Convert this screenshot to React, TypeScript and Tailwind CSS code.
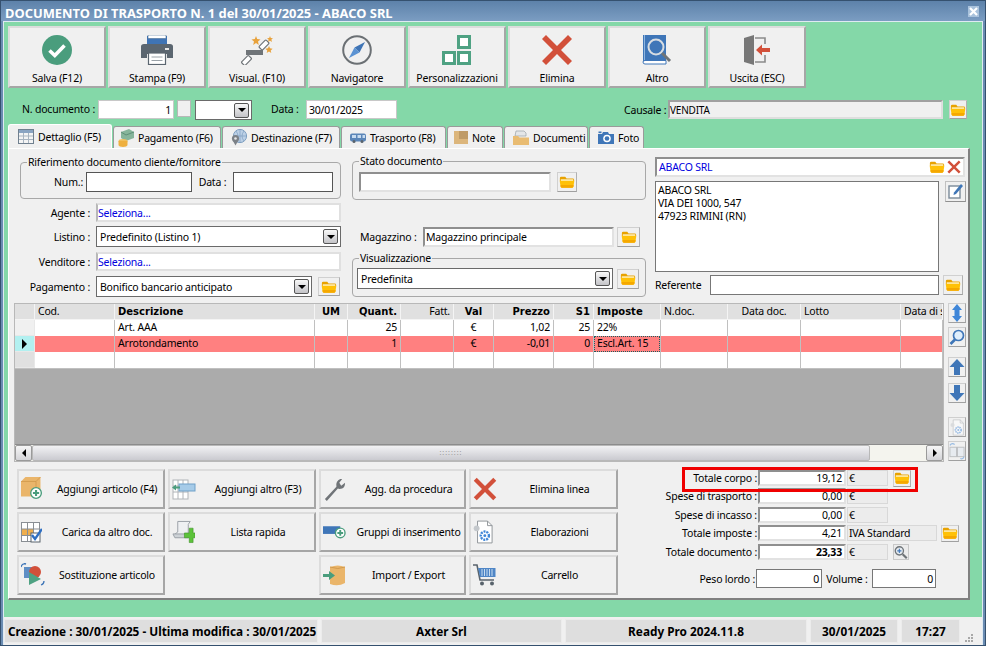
import type { ReactNode } from 'react';

const Folder = ({ size = 18 }: { size?: number }) => (
  <svg width={size} height={size} viewBox="0 0 18 18">
    <path d="M1 4.5 Q1 3 2.5 3 H7 L8.5 5 H15.5 Q17 5 17 6.5 V8 H1 Z" fill="#e8a200" />
    <path d="M2 6 H16 V8 H2 Z" fill="#fff3c8" />
    <path d="M0.8 7.5 H17.2 L16.3 14 Q16 15.5 14.5 15.5 H3.5 Q2 15.5 1.7 14 Z" fill="#ffc107" />
    <path d="M1.8 12.5 H16.4 L16.2 14 Q16 15.5 14.5 15.5 H3.5 Q2 15.5 1.9 14 Z" fill="#f5a800" />
  </svg>
);

const RedX = ({ size = 32 }: { size?: number }) => (
  <svg width={size} height={size} viewBox="0 0 32 32">
    <path d="M5 1 L16 12 L27 1 L31 5 L20 16 L31 27 L27 31 L16 20 L5 31 L1 27 L12 16 L1 5 Z" fill="#d2503a" />
  </svg>
);

const SaveIcon = () => (
  <svg width="30" height="30" viewBox="0 0 30 30">
    <circle cx="15" cy="15" r="15" fill="#4a9d7d" />
    <path d="M7.5 15.5 L12.8 20.5 L22.5 10.5" fill="none" stroke="#fff" strokeWidth="3.6" />
  </svg>
);

const PrintIcon = () => (
  <svg width="32" height="30" viewBox="0 0 32 30">
    <path d="M6 1 H26 V11 H6 Z" fill="#3f74b5" />
    <path d="M7 0 H25 V3.5 H7 Z" fill="#fff" stroke="#4c6f96" strokeWidth="0.6" />
    <path d="M0 11.5 Q0 9 3 9 H29 Q32 9 32 11.5 V23 H26 V19 H6 V23 H0 Z" fill="#5b6670" />
    <rect x="24" y="13" width="4" height="2" fill="#e8e8e8" />
    <rect x="7.5" y="18" width="17" height="11.5" fill="#fff" stroke="#5b6670" strokeWidth="1.2" />
    <path d="M10.5 22 H21.5 M10.5 25.5 H21.5" stroke="#9aa2a8" strokeWidth="1" />
  </svg>
);

const WandIcon = () => (
  <svg width="32" height="30" viewBox="0 0 32 30">
    <path d="M5 15 H22 V20 H5 Z" fill="#6f7478" />
    <rect x="18" y="7.5" width="10" height="5" rx="1" transform="rotate(-45 23 10)" fill="#fff" stroke="#6f7478" strokeWidth="1.2" />
    <rect x="0.5" y="23" width="10" height="5" rx="1" transform="rotate(-45 5.5 25.5)" fill="#fff" stroke="#6f7478" strokeWidth="1.2" />
    <path d="M15 1 L16.2 4 L19.5 4.5 L17 6.5 L17.8 10 L15 8 L12.2 10 L13 6.5 L10.5 4.5 L13.8 4 Z" fill="#e8a23c" />
    <path d="M29 1 L29.8 3 L32 3.3 L30.4 4.6 L30.9 7 L29 5.7 L27.1 7 L27.6 4.6 L26 3.3 L28.2 3 Z" fill="#e8a23c" />
    <path d="M28 11 L29 13.3 L31.6 13.7 L29.7 15.4 L30.3 18 L28 16.6 L25.7 18 L26.3 15.4 L24.4 13.7 L27 13.3 Z" fill="#e8a23c" />
  </svg>
);

const CompassIcon = () => (
  <svg width="30" height="30" viewBox="0 0 30 30">
    <circle cx="15" cy="15" r="13.8" fill="#f0f0f0" stroke="#6b7074" strokeWidth="2" />
    <path d="M23 7 L17.5 17.5 L12.5 12.5 Z" fill="#3f74b5" />
    <path d="M7 23 L12.5 12.5 L17.5 17.5 Z" fill="#5b93d3" />
  </svg>
);

const PersonalIcon = () => (
  <svg width="30" height="30" viewBox="0 0 30 30" fill="#fff" stroke="#4fa283" strokeWidth="3">
    <rect x="16.5" y="1.5" width="11" height="11" />
    <rect x="1.5" y="17.5" width="11" height="11" />
    <rect x="16.5" y="17.5" width="11" height="11" />
  </svg>
);

const BookIcon = () => (
  <svg width="30" height="30" viewBox="0 0 30 30">
    <path d="M1 0 H24 V26 H3 Q1 26 1 28 Z" fill="#3f76b8" />
    <path d="M1 27 Q1 25.5 3 25.5 H24 V29 H3 Q1 29 1 27 Z" fill="#fff" stroke="#3f76b8" />
    <path d="M2.5 0 V25" stroke="#8fb6e0" />
    <circle cx="14" cy="12" r="7.5" fill="#3f76b8" stroke="#d8dde2" strokeWidth="2" />
    <path d="M20 18 L28 26" stroke="#6f7478" strokeWidth="3" />
  </svg>
);

const ExitIcon = () => (
  <svg width="28" height="30" viewBox="0 0 28 30">
    <path d="M1 3 L11 0 V30 L1 27 Z" fill="#777" />
    <path d="M12 3 H22 V9 M22 20 V27 H12" fill="none" stroke="#8a8a8a" strokeWidth="1.6" />
    <path d="M13 15 L19 9.5 V13 H27 V17 H19 V20.5 Z" fill="#d2503a" />
  </svg>
);

const EditIcon = () => (
  <svg width="17" height="17" viewBox="0 0 17 17">
    <rect x="2" y="3" width="11" height="12" fill="#fff" stroke="#7b8a99" strokeWidth="1.4" />
    <path d="M14 1 L16 3 L9 11 L6.5 12 L7 9.5 Z" fill="#3f76b8" />
  </svg>
);

const Magnifier = () => (
  <svg width="16" height="16" viewBox="0 0 16 16">
    <circle cx="9.5" cy="6.5" r="5" fill="#dfeefc" stroke="#3f76b8" strokeWidth="1.7" />
    <path d="M6 10.5 L1.5 15" stroke="#3f76b8" strokeWidth="2.6" />
  </svg>
);

const MagnifierRight = () => (
  <svg width="17" height="17" viewBox="0 0 17 17">
    <circle cx="6.5" cy="6.5" r="5" fill="#e4eaf0" stroke="#6f7478" strokeWidth="1.6" />
    <path d="M10.5 10.5 L15.5 15.5" stroke="#6f7478" strokeWidth="2.6" />
    <path d="M4 6.5 H9 M6.5 4 V9" stroke="#3f76b8" strokeWidth="1.3" />
  </svg>
);

const Arrow = ({ dir }: { dir: 'up' | 'down' | 'both' }) => (
  <svg width="16" height="18" viewBox="0 0 16 18">
    {dir === 'up' && <path d="M8 1 L15.5 9 H11 V17 H5 V9 H0.5 Z" fill="#3f76b8" />}
    {dir === 'down' && <path d="M8 17 L15.5 9 H11 V1 H5 V9 H0.5 Z" fill="#3f76b8" />}
    {dir === 'both' && <path d="M8 0 L13 6 H10.5 V12 H13 L8 18 L3 12 H5.5 V6 H3 Z" fill="#3f86d8" />}
  </svg>
);

const GearDoc = ({ faded = false, w = 22, h = 26 }: { faded?: boolean; w?: number; h?: number }) => (
  <svg width={w} height={h} viewBox="0 0 22 26" className={faded ? 'opacity-50' : ''}>
    <path d="M5 1 H16 L21 6 V25 H5 Z" fill="#fff" stroke="#8a8f94" />
    <path d="M16 1 V6 H21" fill="none" stroke="#8a8f94" />
    <circle cx="4" cy="9" r="3.2" fill="#c4c8cc" />
    <circle cx="13" cy="17" r="4.5" fill="none" stroke="#3f86d8" strokeWidth="2.6" strokeDasharray="2.2 1" />
    <circle cx="13" cy="17" r="1.6" fill="#3f86d8" />
  </svg>
);

const CopyDoc = () => (
  <svg width="17" height="18" viewBox="0 0 17 18" className="opacity-50">
    <rect x="1" y="5" width="7" height="10" fill="#dfe8f0" stroke="#8a8f94" />
    <rect x="9" y="5" width="7" height="10" fill="#dfe8f0" stroke="#8a8f94" />
    <path d="M1 3 Q3 0 6 2 M16 15 Q15 18 12 17" fill="none" stroke="#3f86d8" strokeWidth="1.3" />
  </svg>
);

const TableIcon = () => (
  <svg width="16" height="15" viewBox="0 0 16 15">
    <rect x="0.5" y="0.5" width="15" height="14" fill="#f4f4f4" stroke="#70808f" />
    <rect x="1" y="1" width="14" height="3" fill="#8aa4c2" />
    <path d="M1 7 H15 M1 10.5 H15 M5.5 4 V14 M10.5 4 V14" stroke="#a8b4c0" />
  </svg>
);
const MoneyIcon = () => (
  <svg width="16" height="18" viewBox="0 0 16 18">
    <path d="M3 3 L11 0 L16 3 V9 L8 12 L3 9 Z" fill="#86b59b" />
    <path d="M3 3 L8 6 L16 3" fill="none" stroke="#5f8f78" />
    <ellipse cx="5" cy="12" rx="4.5" ry="2" fill="#f1c05e" />
    <path d="M0.5 12 V16 C0.5 18.5 9.5 18.5 9.5 16 V12" fill="#eeb040" />
  </svg>
);
const GlobeIcon = () => (
  <svg width="16" height="17" viewBox="0 0 16 17">
    <circle cx="9" cy="7" r="6.6" fill="#bcd0e6" stroke="#7f9fc0" />
    <path d="M2.5 7 H15.5 M9 0.5 V13.5 M5 2 Q9 7 5 12 M13 2 Q9 7 13 12" fill="none" stroke="#7f9fc0" strokeWidth="0.7" />
    <circle cx="4.5" cy="9.5" r="3.6" fill="#7c8187" />
    <path d="M2 12 L4.5 16.5 L7 12 Z" fill="#7c8187" />
    <circle cx="4.5" cy="9.5" r="1.3" fill="#e8e8e8" />
  </svg>
);
const TruckIcon = () => (
  <svg width="16" height="10" viewBox="0 0 16 10">
    <rect x="0" y="0.5" width="16" height="8" rx="2" fill="#5b86b8" />
    <path d="M2 2 H6 V5 H2 Z M7.5 2 H11 V5 H7.5 Z M12.5 2 H15 V5 H12.5 Z" fill="#c8dcf0" />
    <circle cx="4" cy="8.5" r="1.5" fill="#59636c" />
    <circle cx="12" cy="8.5" r="1.5" fill="#59636c" />
  </svg>
);
const NoteIcon = () => (
  <svg width="14" height="13" viewBox="0 0 14 13">
    <rect width="14" height="13" fill="#d9b277" />
    <path d="M5 0 H14 V8 H5 Z" fill="#b89563" opacity="0.8" />
    <path d="M0 0 H5 V8 H14 V13 H0 Z" fill="#dcb67c" />
  </svg>
);
const DocsIcon = () => (
  <svg width="16" height="15" viewBox="0 0 16 15">
    <path d="M2 6 L3 1 H11 L13 3 V6 Z" fill="#e4e6e8" stroke="#9aa0a6" strokeWidth="0.7" />
    <path d="M0 6 H5 L6.5 7.5 H16 V15 H0 Z" fill="#e9bc72" />
  </svg>
);
const CameraIcon = () => (
  <svg width="16" height="13" viewBox="0 0 16 13">
    <path d="M0 3 H4 L5 1 H10 L11 3 H16 V13 H0 Z" fill="#3f76b8" />
    <rect x="0.5" y="0.5" width="3" height="1.6" fill="#3f76b8" />
    <circle cx="9" cy="7.5" r="3.8" fill="#fff" />
    <circle cx="9" cy="7.5" r="2.3" fill="#3f76b8" />
  </svg>
);

const AddBox = () => (
  <svg width="23" height="24" viewBox="0 0 26 27">
    <path d="M0 5 L5 0 H22 V22 H0 Z" fill="#eab56a" />
    <path d="M0 5 H17 L22 0" fill="none" stroke="#d29a4d" />
    <path d="M17 5 V22" stroke="#d29a4d" />
    <circle cx="17" cy="18" r="6" fill="#fff" stroke="#4a9d7d" strokeWidth="1.5" />
    <path d="M13.5 18 H20.5 M17 14.5 V21.5" stroke="#4a9d7d" strokeWidth="2.4" />
  </svg>
);
const AddOther = () => (
  <svg width="24" height="21" viewBox="0 0 24 21">
    <rect x="1" y="1" width="15" height="19" fill="#fff" stroke="#b0b4b8" />
    <path d="M1 7 H16 M1 13 H16 M6 1 V20 M11 1 V20" stroke="#b0b4b8" />
    <rect x="7" y="5" width="16" height="7" fill="#a6cbe8" stroke="#6fa0c8" />
    <path d="M0 8.5 L4 5.5 V11.5 Z M3 7.5 H8 V9.5 H3 Z" fill="#4a9d7d" />
  </svg>
);
const LoadDoc = () => (
  <svg width="21" height="21" viewBox="0 0 21 21">
    <rect x="0.5" y="0.5" width="18" height="19" fill="#fff" stroke="#8a8f94" />
    <rect x="1" y="7" width="11.5" height="6" fill="#efae4d" />
    <path d="M0.5 7 H18.5 M0.5 13.5 H18.5 M6.5 0.5 V19.5 M12.5 0.5 V19.5" stroke="#8a8f94" />
    <rect x="10" y="11" width="9" height="9" fill="#fff" stroke="#59636c" />
    <path d="M11 13 L14 17 L21 7" fill="none" stroke="#2f6fc2" strokeWidth="2.4" />
  </svg>
);
const ListIcon = () => (
  <svg width="23" height="24" viewBox="0 0 24 24">
    <path d="M6 1 H19 L17 4 V15 H2 L6 12 Z" fill="#eef0f2" stroke="#9aa0a6" />
    <path d="M1 14 H15 L17 18 H3 Z" fill="#cdd2d6" stroke="#9aa0a6" />
    <path d="M13 13 H18 V8 H22 V13 H24 V18 H22 V23 H18 V18 H13 Z" fill="#5cc23a" stroke="#3b8f24" strokeWidth="0.6" />
  </svg>
);
const SwapIcon = () => (
  <svg width="24" height="24" viewBox="0 0 24 24">
    <rect x="3" y="4" width="10" height="11" fill="#5f8ec4" />
    <circle cx="14" cy="9" r="6" fill="#d2503a" />
    <path d="M8 9 L20 16 L8 22 Z" fill="#4fa283" />
    <path d="M0 4 Q1 0 5 1 M5 1 L3 0 M20 22 Q23 21 23 18" fill="none" stroke="#3f76b8" strokeWidth="1.3" />
  </svg>
);
const WrenchIcon = () => (
  <svg width="23" height="23" viewBox="0 0 24 24">
    <path d="M2 22 L14 9 Q13 3 18 1 L20 1 L17 5 L19 8 L23 5 Q23 10 20 11 Q17 12 15.5 11 L4 24 Z" fill="#707478" />
  </svg>
);
const GroupIcon = () => (
  <svg width="23" height="14" viewBox="0 0 24 14">
    <rect x="0" y="1" width="18" height="8" fill="#3f76b8" />
    <circle cx="18" cy="8" r="5" fill="#fff" stroke="#4a9d7d" strokeWidth="1.4" />
    <path d="M15 8 H21 M18 5 V11" stroke="#4a9d7d" strokeWidth="2" />
  </svg>
);
const ImportIcon = () => (
  <svg width="23" height="21" viewBox="0 0 23 21">
    <path d="M7 2 Q15 -1 22 2 V18 Q15 22 7 19 Z" fill="#eab56a" />
    <path d="M7 2 Q15 5 22 2" fill="none" stroke="#d29a4d" />
    <path d="M0 9 H6 V6 L12 10.5 L6 15 V12 H0 Z" fill="#4a9d7d" />
  </svg>
);
const CartIcon = () => (
  <svg width="23" height="22" viewBox="0 0 23 22">
    <path d="M0 1 H4 L7 16 H21" fill="none" stroke="#59636c" strokeWidth="1.6" />
    <path d="M5 4 H22.5 V13 H7 Z" fill="#4f86c6" />
    <path d="M9 5 V12 M11.5 5 V12 M14 5 V12 M16.5 5 V12 M19 5 V12" stroke="#c8dcf0" />
    <circle cx="9" cy="19.5" r="2" fill="#59636c" />
    <circle cx="19" cy="19.5" r="2" fill="#59636c" />
  </svg>
);
const Grip = () => (
  <svg width="10" height="10" viewBox="0 0 10 10" fill="#a8a8a8">
    <rect x="7" y="1" width="2" height="2" />
    <rect x="4" y="4" width="2" height="2" />
    <rect x="7" y="4" width="2" height="2" />
    <rect x="1" y="7" width="2" height="2" />
    <rect x="4" y="7" width="2" height="2" />
    <rect x="7" y="7" width="2" height="2" />
  </svg>
);

const raised = 'border-2 border-t-[#dcdcdc] border-l-[#dcdcdc] border-r-[#a6a6a6] border-b-[#a6a6a6] bg-[#f0f0f0]';
const sunken = 'border-2 border-t-[#8f8f8f] border-l-[#8f8f8f] border-r-[#e2e2e2] border-b-[#e2e2e2]';

const FolderBtn = ({ w = 'w-[20px]', h = 'h-[20px]' }: { w?: string; h?: string }) => (
  <div className={`${w} ${h} shrink-0 flex items-center justify-center border border-[#d0d0d0] border-b-[#a0a0a0] border-r-[#b0b0b0] bg-[#f0f0f0]`}>
    <Folder size={16} />
  </div>
);

const ComboArrow = () => (
  <div className="w-[15px] h-[15px] shrink-0 flex items-center justify-center rounded-[2px] border border-[#555] bg-gradient-to-b from-[#f8f8f8] to-[#c4c4c8]">
    <div className="w-0 h-0 border-x-[4px] border-x-transparent border-t-[4px] border-t-black" />
  </div>
);

const Combo = ({ text, className }: { text?: string; className: string }) => (
  <div className={`${className} flex items-center justify-between border border-[#6a6a6a] bg-white pl-[3px] pr-[2px]`}>
    <span>{text}</span>
    <ComboArrow />
  </div>
);

const LinkField = ({ className }: { className: string }) => (
  <div className={`${className} flex items-center border-2 border-[#e0e0e0] border-l-[#b8b8b8] bg-white text-[#0000e0]`}>Seleziona...</div>
);

const GroupBox = ({ title, className, children }: { title: string; className: string; children: ReactNode }) => (
  <div className={`relative rounded-[4px] border border-[#a8a8a8] ${className}`}>
    <span className="absolute -top-[8px] left-[6px] bg-[#f0f0f0] px-[1px] leading-[14px]">{title}</span>
    {children}
  </div>
);

const tools = [
  { label: 'Salva (F12)', icon: <SaveIcon /> },
  { label: 'Stampa (F9)', icon: <PrintIcon /> },
  { label: 'Visual. (F10)', icon: <WandIcon /> },
  { label: 'Navigatore', icon: <CompassIcon /> },
  { label: 'Personalizzazioni', icon: <PersonalIcon /> },
  { label: 'Elimina', icon: <RedX /> },
  { label: 'Altro', icon: <BookIcon /> },
  { label: 'Uscita (ESC)', icon: <ExitIcon /> },
];

const tabs = [
  { label: 'Dettaglio (F5)', cls: 'w-[104px] pl-[9px]', icon: <TableIcon />, active: true },
  { label: 'Pagamento (F6)', cls: 'w-[108px] pl-[4px]', icon: <MoneyIcon /> },
  { label: 'Destinazione (F7)', cls: 'w-[118px] pl-[8px]', icon: <GlobeIcon /> },
  { label: 'Trasporto (F8)', cls: 'w-[105px] pl-[8px]', icon: <TruckIcon /> },
  { label: 'Note', cls: 'w-[56px] pl-[6px]', icon: <NoteIcon /> },
  { label: 'Documenti', cls: 'w-[84px] pl-[8px]', icon: <DocsIcon /> },
  { label: 'Foto', cls: 'w-[55px] pl-[8px]', icon: <CameraIcon /> },
];

const columns = [
  { title: 'Cod.', w: 'w-[80px]', align: 'text-left' },
  { title: 'Descrizione', w: 'w-[200px]', align: 'text-left', bold: true },
  { title: 'UM', w: 'w-[33px]', align: 'text-center', bold: true },
  { title: 'Quant.', w: 'w-[53px]', align: 'text-right', bold: true },
  { title: 'Fatt.', w: 'w-[53px]', align: 'text-right' },
  { title: 'Val', w: 'w-[40px]', align: 'text-center', bold: true },
  { title: 'Prezzo', w: 'w-[60px]', align: 'text-right', bold: true },
  { title: 'S1', w: 'w-[40px]', align: 'text-right', bold: true },
  { title: 'Imposte', w: 'w-[67px]', align: 'text-left', bold: true },
  { title: 'N.doc.', w: 'w-[67px]', align: 'text-left' },
  { title: 'Data doc.', w: 'w-[73px]', align: 'text-center' },
  { title: 'Lotto', w: 'w-[100px]', align: 'text-left' },
  { title: 'Data di s', w: 'w-[42px]', align: 'text-left' },
];

const rows = [
  ['', 'Art. AAA', '', '25', '', '€', '1,02', '25', '22%', '', '', '', ''],
  ['', 'Arrotondamento', '', '1', '', '€', '-0,01', '0', 'Escl.Art. 15', '', '', '', ''],
  ['', '', '', '', '', '', '', '', '', '', '', '', ''],
];

const actions = [
  { label: 'Aggiungi articolo (F4)', icon: <AddBox /> },
  { label: 'Aggiungi altro (F3)', icon: <AddOther /> },
  { label: 'Agg. da procedura', icon: <WrenchIcon /> },
  { label: 'Elimina linea', icon: <RedX size={24} /> },
  { label: 'Carica da altro doc.', icon: <LoadDoc /> },
  { label: 'Lista rapida', icon: <ListIcon /> },
  { label: 'Gruppi di inserimento', icon: <GroupIcon /> },
  { label: 'Elaborazioni', icon: <GearDoc w={20} h={24} /> },
  { label: 'Sostituzione articolo', icon: <SwapIcon /> },
  null,
  { label: 'Import / Export', icon: <ImportIcon /> },
  { label: 'Carrello', icon: <CartIcon /> },
];

const sideButtons = [
  { icon: <Arrow dir="both" />, cls: 'mt-0' },
  { icon: <Magnifier />, cls: 'mt-[4px]' },
  { icon: <Arrow dir="up" />, cls: 'mt-[10px]' },
  { icon: <Arrow dir="down" />, cls: 'mt-[6px]' },
  { icon: <GearDoc faded w={14} h={17} />, cls: 'mt-[14px]' },
  { icon: <CopyDoc />, cls: 'mt-[4px]' },
];

const totals = [
  { label: 'Totale corpo :', value: '19,12', unit: '€', cls: 'mt-[1px]', folder: true },
  { label: 'Spese di trasporto :', value: '0,00', unit: '€', cls: 'mt-[2px]' },
  { label: 'Spese di incasso :', value: '0,00', unit: '€', cls: 'mt-[3px]' },
  { label: 'Totale imposte :', value: '4,21', unit: 'IVA Standard', cls: 'mt-[2px]', folder: true, wide: true },
  { label: 'Totale documento :', value: '23,33', unit: '€', cls: 'mt-[3px]', bold: true, zoom: true },
];

export default function App() {
  return (
    <div className="w-[986px] h-[646px] flex flex-col overflow-hidden whitespace-nowrap border border-[#35516f] bg-[#6a8cb2] text-[10.5px] tracking-[-0.2px] leading-[14px] text-black font-['Noto_Sans',sans-serif]">
      {/* title bar */}
      <div className="h-[20px] shrink-0 flex items-center justify-between bg-gradient-to-b from-[#5d82aa] to-[#7b9dc2] pl-[4px] pr-[6px] text-white">
        <span className="pt-[3px] text-[12.9px] tracking-normal font-bold">DOCUMENTO DI TRASPORTO N. 1 del 30/01/2025 - ABACO SRL</span>
        <div className="w-[11px] h-[11px] flex items-center justify-center bg-[#a9c2dc]">
          <svg width="9" height="9" viewBox="0 0 9 9"><path d="M1 1 L8 8 M8 1 L1 8" stroke="#fff" strokeWidth="2.2" /></svg>
        </div>
      </div>

      <div className="mx-[2px] flex-1 flex flex-col border border-b-0 border-[#dfeaf2] bg-[#84d8a8]">
        {/* toolbar */}
        <div className="mt-[4px] ml-[4px] flex gap-[2px]">
          {tools.map((t) => (
            <div key={t.label} className={`w-[98px] h-[62px] flex flex-col items-center ${raised}`}>
              <div className="h-[30px] mt-[7px] flex items-center justify-center">{t.icon}</div>
              <span className="mt-[6px]">{t.label}</span>
            </div>
          ))}
        </div>

        {/* document row */}
        <div className="mt-[12px] ml-[4px] w-[961px] flex items-start">
          <span className="w-[87px] text-right leading-[18px]">N. documento :</span>
          <div className="ml-[3px] w-[76px] h-[19px] flex items-center justify-end border border-[#c8c8c8] bg-white pr-[2px]">1</div>
          <div className="ml-[3px] w-[14px] h-[17px] border border-[#b8b8b8] bg-[#f0f0f0]" />
          <Combo className="ml-[4px] w-[57px] h-[20px]" />
          <span className="ml-[19px] w-[30px] leading-[18px]">Data :</span>
          <div className="ml-[5px] w-[91px] h-[19px] flex items-center border border-[#c8c8c8] bg-white pl-[2px]">30/01/2025</div>
          <span className="ml-[227px] w-[44px] leading-[20px]">Causale :</span>
          <div className="w-[275px] h-[19px] flex items-center border-2 border-t-[#a0a0a0] border-l-[#a0a0a0] border-r-[#dedede] border-b-[#dedede] bg-[#f0f0f0] text-[10px]">VENDITA</div>
          <div className="ml-[6px]"><FolderBtn w="w-[18px]" h="h-[19px]" /></div>
        </div>

        {/* tabs */}
        <div className="mt-[4px] ml-[4px] h-[24px] flex items-end gap-[1px]">
          {tabs.map((t) => (
            <div
              key={t.label}
              className={`${t.cls} flex items-center gap-[4px] rounded-t-[3px] border border-b-0 border-[#9a9a9a] bg-[#f0f0f0] ${t.active ? 'h-[24px] border-white' : 'h-[22px]'}`}
            >
              <span className="shrink-0">{t.icon}</span>
              <span>{t.label}</span>
            </div>
          ))}
        </div>

        {/* tab page */}
        <div className="ml-[4px] w-[962px] h-[452px] flex flex-col border-l border-t border-l-white border-t-white border-r-2 border-b-2 border-r-[#808080] border-b-[#808080] bg-[#f0f0f0] pl-[5px]">
          <div className="ml-[6px] h-[140px] mt-[8px] flex">
            {/* left column */}
            <div className="w-[321px] flex flex-col">
              <GroupBox title="Riferimento documento cliente/fornitore" className="mt-[5px] h-[37px] flex items-center pt-[3px]">
                <span className="w-[62px] text-right">Num.:</span>
                <div className="ml-[3px] w-[106px] h-[20px] border border-[#555] bg-white" />
                <span className="w-[41px] text-center">Data :</span>
                <div className="w-[100px] h-[20px] border border-[#555] bg-white" />
              </GroupBox>
              <div className="mt-[4px] flex items-center">
                <span className="w-[70px] text-right">Agente :</span>
                <LinkField className="ml-[6px] w-[245px] h-[19px]" />
              </div>
              <div className="mt-[4px] flex items-center">
                <span className="w-[70px] text-right">Listino :</span>
                <Combo text="Predefinito (Listino 1)" className="ml-[6px] w-[245px] h-[21px]" />
              </div>
              <div className="mt-[5px] flex items-center">
                <span className="w-[70px] text-right">Venditore :</span>
                <LinkField className="ml-[6px] w-[245px] h-[19px]" />
              </div>
              <div className="mt-[5px] flex items-center">
                <span className="w-[70px] text-right">Pagamento :</span>
                <Combo text="Bonifico bancario anticipato" className="ml-[6px] w-[216px] h-[21px]" />
                <div className="ml-[6px]"><FolderBtn w="w-[22px]" h="h-[19px]" /></div>
              </div>
            </div>

            {/* middle column */}
            <div className="ml-[11px] w-[294px] flex flex-col">
              <GroupBox title="Stato documento" className="mt-[4px] h-[39px] flex items-center pl-[6px] pt-[3px]">
                <div className={`w-[192px] h-[20px] bg-white ${sunken}`} />
                <div className="ml-[6px]"><FolderBtn /></div>
              </GroupBox>
              <div className="mt-[27px] flex items-center">
                <span className="w-[71px] pl-[8px]">Magazzino :</span>
                <div className={`w-[191px] h-[20px] flex items-center bg-white pl-[1px] ${sunken}`}>Magazzino principale</div>
                <div className="ml-[3px]"><FolderBtn w="w-[23px]" h="h-[20px]" /></div>
              </div>
              <GroupBox title="Visualizzazione" className="mt-[11px] h-[40px] flex items-center pl-[4px] pt-[3px]">
                <Combo text="Predefinita" className="w-[256px] h-[21px]" />
                <div className="ml-[4px]"><FolderBtn w="w-[22px]" h="h-[20px]" /></div>
              </GroupBox>
            </div>

            {/* customer column */}
            <div className="ml-[9px] w-[312px] flex flex-col">
              <div className={`w-[310px] h-[20px] flex items-center justify-between bg-white pl-[2px] pr-[2px] text-[#0000e0] ${sunken}`}>
                <span>ABACO SRL</span>
                <span className="flex items-center gap-[2px]"><Folder size={16} /><RedX size={14} /></span>
              </div>
              <div className="mt-[4px] flex items-start">
                <div className="w-[284px] h-[91px] border border-[#777] bg-white pl-[2px] pt-[2px] leading-[13px]">
                  <div>ABACO SRL</div>
                  <div>VIA DEI 1000, 547</div>
                  <div>47923 RIMINI (RN)</div>
                </div>
                <div className="ml-[6px] w-[21px] h-[21px] flex items-center justify-center border border-[#c0c0c0] border-b-[#909090] border-r-[#a0a0a0] bg-[#f0f0f0]"><EditIcon /></div>
              </div>
              <div className="mt-[3px] flex items-center">
                <span className="w-[55px]">Referente</span>
                <div className="w-[229px] h-[20px] border border-[#777] bg-white" />
                <div className="ml-[4px]"><FolderBtn /></div>
              </div>
            </div>
          </div>

          {/* grid */}
          <div className="mt-[6px] flex">
            <div className="w-[930px] h-[159px] flex flex-col border border-[#b8b8b8] bg-[#ababab]">
              <div className="flex h-[16px] shrink-0 bg-[#e0e0e0] border-b border-[#f4f4f4]">
                <div className="w-[20px] border-r border-[#f4f4f4]" />
                {columns.map((c) => (
                  <div key={c.title} className={`${c.w} ${c.align} ${c.bold ? "font-bold font-['DejaVu_Sans',sans-serif] text-[10px] tracking-normal" : ''} shrink-0 overflow-hidden border-r border-[#f4f4f4] px-[3px] leading-[15px]`}>{c.title}</div>
                ))}
              </div>
              {rows.map((r, i) => (
                <div key={i} className={`flex h-[16px] shrink-0 ${i === 1 ? 'bg-[#ff8080]' : 'bg-white'}`}>
                  <div className={`w-[20px] shrink-0 flex items-center justify-center border-r border-b border-[#e8e8e8] ${i === 1 ? 'bg-[#b2f0f0]' : i === 2 ? 'bg-[#e0e0e0]' : 'bg-[#f0f0f0]'}`}>
                    {i === 1 && <div className="w-0 h-0 border-y-[5px] border-y-transparent border-l-[5px] border-l-black" />}
                  </div>
                  {r.map((v, j) => (
                    <div key={j} className={`${columns[j].w} ${columns[j].align} relative shrink-0 overflow-hidden px-[3px] leading-[15px] border-r border-[#c0c0c0]`}>
                      {v}
                      {i === 1 && j === 8 && <div className="absolute inset-0 border border-dotted border-[#1a5f5f]" />}
                    </div>
                  ))}
                </div>
              ))}
              <div className="flex-1 border-t border-[#c0c0c0]" />
              <div className="h-[17px] shrink-0 flex items-center border-t border-[#8c8c8c] bg-[#f4f4ee]">
                <div className="w-[17px] h-[16px] flex items-center justify-center border border-[#9a9a9a] rounded-[2px] bg-gradient-to-b from-[#f6f6f6] to-[#d4d4d8]">
                  <div className="w-0 h-0 border-y-[4px] border-y-transparent border-r-[4px] border-r-black" />
                </div>
                <div className="w-[838px] h-[16px] flex items-center justify-center rounded-[2px] border border-[#b8b8b8] bg-gradient-to-b from-[#f2f2f4] to-[#cacad0] text-[#9a9a9a] text-[7px] tracking-[1px]">::::::::</div>
                <div className="flex-1" />
                <div className="w-[17px] h-[16px] flex items-center justify-center border border-[#9a9a9a] rounded-[2px] bg-gradient-to-b from-[#f6f6f6] to-[#d4d4d8]">
                  <div className="w-0 h-0 border-y-[4px] border-y-transparent border-l-[4px] border-l-black" />
                </div>
              </div>
            </div>
            <div className="ml-[4px] w-[18px] flex flex-col">
              {sideButtons.map((b, i) => (
                <div key={i} className={`${b.cls} w-[18px] h-[20px] flex items-center justify-center border border-[#cfcfcf] border-b-[#a0a0a0] border-r-[#a8a8a8] bg-[#f0f0f0]`}>{b.icon}</div>
              ))}
            </div>
          </div>

          {/* bottom actions + totals */}
          <div className="mt-[7px] flex">
            <div className="ml-[3px] grid grid-cols-[148px_148px_147px_149px] grid-rows-[40px_40px_40px] gap-x-[3px] gap-y-[3px]">
              {actions.map((a, i) => a ? (
                <div key={a.label} className={`flex items-center ${raised}`}>
                  <div className="ml-[2px] w-[30px] shrink-0 flex items-center">{a.icon}</div>
                  <span className="flex-1 text-center">{a.label}</span>
                </div>
              ) : <div key={i} />)}
            </div>

            <div className="relative ml-[22px]">
              <div className="absolute -top-[2px] left-[42px] w-[236px] h-[25px] border-[3px] border-[#f00000]" />
              {totals.map((t) => (
                <div key={t.label} className={`${t.cls} flex items-center h-[16px]`}>
                  <span className="w-[117px] text-right">{t.label}</span>
                  <div className={`ml-[1px] w-[88px] h-[16px] flex items-center justify-end bg-white pr-[2px] ${t.bold ? 'font-bold' : ''} ${sunken}`}>{t.value}</div>
                  <div className={`ml-[1px] ${t.wide ? 'w-[90px]' : 'w-[41px]'} h-[16px] flex items-center border border-[#d8d8d8] bg-[#ececec] pl-[1px]`}>{t.unit}</div>
                  {t.folder && <div className={t.wide ? 'ml-[4px]' : 'ml-[5px]'}><FolderBtn w="w-[18px]" h="h-[17px]" /></div>}
                  {t.zoom && <div className="ml-[5px] w-[16px] h-[16px] flex items-center justify-center border border-[#c8c8c8] bg-[#ececec]"><MagnifierRight /></div>}
                </div>
              ))}
              <div className="mt-[9px] flex items-center">
                <span className="w-[115px] text-right">Peso lordo :</span>
                <div className="ml-[1px] w-[66px] h-[19px] flex items-center justify-end border border-[#777] bg-white pr-[2px]">0</div>
                <span className="w-[50px] text-center">Volume :</span>
                <div className="w-[64px] h-[19px] flex items-center justify-end border border-[#777] bg-white pr-[2px]">0</div>
              </div>
            </div>
          </div>
        </div>

        <div className="flex-1" />

        {/* status bar */}
        <div className="h-[28px] shrink-0 flex items-center gap-[3px] bg-[#f0f0f0] font-bold text-[11.8px] tracking-normal">
          <div className="w-[314px] h-[24px] flex items-center bg-[#dedede] border border-[#ececec] pl-[3px]">Creazione : 30/01/2025 - Ultima modifica : 30/01/2025</div>
          <div className="w-[241px] h-[24px] flex items-center justify-center bg-[#dedede] border border-[#ececec]">Axter Srl</div>
          <div className="w-[242px] h-[24px] flex items-center justify-center bg-[#dedede] border border-[#ececec]">Ready Pro 2024.11.8</div>
          <div className="w-[88px] h-[24px] flex items-center justify-center bg-[#dedede] border border-[#ececec]">30/01/2025</div>
          <div className="w-[59px] h-[24px] flex items-center justify-center bg-[#dedede] border border-[#ececec]">17:27</div>
          <div className="ml-[1px] self-end mb-[2px]"><Grip /></div>
        </div>
      </div>
    </div>
  );
}
